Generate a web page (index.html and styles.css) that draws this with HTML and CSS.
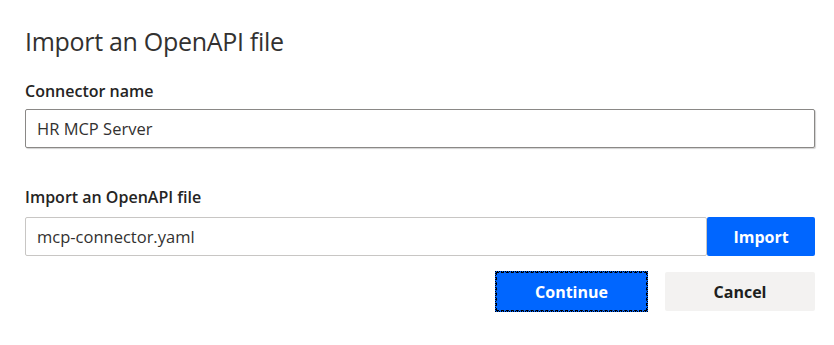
FILE: index.html
```html
<!DOCTYPE html>
<html>
<head>
<meta charset="utf-8">
<link rel="stylesheet" href="styles.css">
</head>
<body>
<div class="dialog">
  <h1 class="title">Import an OpenAPI file</h1>
  <div class="field">
    <label class="label">Connector name</label>
    <div class="input input-dark">HR MCP Server</div>
  </div>
  <div class="field field-second">
    <label class="label label-second">Import an OpenAPI file</label>
    <div class="row">
      <div class="input input-light grow">mcp-connector.yaml</div>
      <button class="btn btn-primary btn-import">Import</button>
    </div>
  </div>
  <div class="actions">
    <button class="btn btn-primary btn-continue">Continue</button>
    <button class="btn btn-secondary">Cancel</button>
  </div>
</div>
</body>
</html>
```
FILE: styles.css
```css
* { box-sizing: border-box; }
html, body { margin: 0; padding: 0; background: #fff; }
body { font-family: "Open Sans", "Noto Sans", sans-serif; color: #323130; }
.dialog { padding: 24px 19px 0 25px; width: 834px; }
.title { margin: 0; font-size: 25px; font-weight: 400; line-height: 34px; letter-spacing: -0.3px; }
.field { margin-top: 23px; }
.field-second { margin-top: 39px; }
.label { display: block; font-size: 16px; font-weight: 600; line-height: 20px; margin-bottom: 8px; color: #252423; }
.label-second { margin-bottom: 10px; }
.input { height: 39px; padding: 0 11px; font-size: 16.5px; line-height: 37px; background: #fff; border-radius: 2px; }
.input-dark { border: 1px solid #8a8886; box-shadow: 1px 1px 1px rgba(0,0,0,0.18); }
.input-light { border: 1px solid #c8c6c4; }
.row { display: flex; }
.grow { flex: 1; }
.btn { font-family: inherit; font-size: 16px; font-weight: 700; border: none; border-radius: 2px; cursor: pointer; }
.btn-primary { background: #0066ff; color: #fff; }
.btn-import { width: 108px; height: 39px; }
.actions { display: flex; justify-content: flex-end; gap: 17px; margin-top: 15px; }
.btn-continue { width: 153px; height: 41px; border: 1px dotted #000; outline: 1px dashed #000; outline-offset: -2px; border-radius: 0; }
.btn-secondary { background: #f3f2f1; color: #201f1e; width: 150px; height: 39px; margin-top: 1px; }
```
